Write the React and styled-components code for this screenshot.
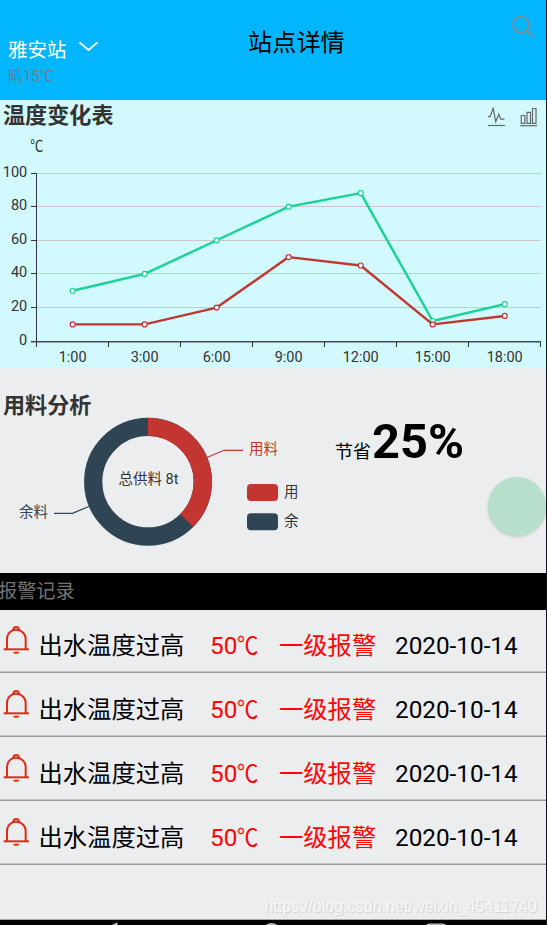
import React from "react";
import styled, { createGlobalStyle } from "styled-components";

const GlobalStyle = createGlobalStyle`
  * {
    box-sizing: border-box;
  }
  body {
    margin: 0;
    background: #ebedef;
    font-family: Roboto, "Noto Sans CJK SC", sans-serif;
  }
`;

const Screen = styled.div`
  position: relative;
  display: flex;
  flex-direction: column;
  width: 547px;
  height: 925px;
  overflow: hidden;
  background: #ebedef;
  border-right: 1px solid #0b1035;
`;

const Header = styled.header`
  display: grid;
  grid-template-columns: 240px 96px 1fr;
  flex: none;
  height: 100px;
  padding: 0 12px 0 8px;
  background: #02b6fd;
`;

const Station = styled.div`
  display: flex;
  flex-direction: column;
  padding-top: 34px;
`;

const StationName = styled.div`
  display: flex;
  align-items: center;
  height: 28px;
  font-size: 19.5px;
  color: #fff;

  svg {
    margin: -4px 0 0 12px;
  }
`;

const Weather = styled.div`
  height: 24px;
  line-height: 28px;
  font-size: 14.9px;
  color: #737b80;
`;

const Degree = styled.span`
  display: inline-block;
  transform: scaleX(0.88);
  transform-origin: left center;
`;

const Title = styled.h1`
  margin: 0;
  padding-top: 26px;
  line-height: 34px;
  font-size: 24.2px;
  font-weight: 400;
  white-space: nowrap;
  color: #000;
`;

const SearchButton = styled.div`
  display: flex;
  justify-content: flex-end;
  padding-top: 15px;
`;

const TemperaturePanel = styled.section`
  flex: none;
  height: 268px;
  background: #d2f9fe;
`;

const PanelHeader = styled.div`
  display: flex;
  justify-content: space-between;
  height: 32px;
  padding: 0 8px 0 3px;
`;

const PanelTitle = styled.h2`
  margin: 0;
  line-height: 30px;
  font-size: 22.1px;
  font-weight: 700;
  color: #333;
`;

const Tools = styled.div`
  display: flex;
  gap: 14px;
  padding-top: 7px;
`;

const Chart = styled.svg`
  display: block;
  overflow: visible;

  text {
    font-size: ${({ $size }) => $size || 14.5}px;
    fill: #333;
  }
`;

const UsagePanel = styled.section`
  display: grid;
  grid-template-columns: 300px 1fr;
  grid-template-rows: 38px 1fr;
  flex: none;
  height: 205px;
  padding-top: 21px;

  ${PanelTitle} {
    grid-column: 1 / 3;
    padding-left: 3px;
    line-height: 32px;
  }
`;

const Saving = styled.div`
  display: flex;
  align-items: baseline;
  gap: 1px;
  height: 60px;
  padding: 0 0 0 35px;
  margin-top: -15px;
  font-size: 18px;
  color: #000;
`;

const SavingValue = styled.strong`
  line-height: 60px;
  font-size: 48.8px;
  font-weight: 700;
`;

const FloatingBall = styled.div`
  position: absolute;
  top: 477px;
  right: 0;
  width: 58.5px;
  height: 58.5px;
  border-radius: 50%;
  background: #b7dfcb;
  box-shadow: 0 1px 3px rgba(0, 0, 0, 0.16);
`;

const RecordsHeader = styled.div`
  flex: none;
  height: 37px;
  line-height: 38px;
  font-size: 19.2px;
  text-indent: -2px;
  color: #737373;
  background: #000;
`;

const RecordList = styled.ul`
  flex: 1;
  margin: 0;
  padding: 0;
  list-style: none;
`;

const Record = styled.li`
  display: grid;
  grid-template-columns: 36.5px 171.5px 69px 116px 1fr;
  height: ${({ $first }) => ($first ? 63 : 64)}px;
  padding-left: 2px;
  border-bottom: 1px solid #98999b;
  box-shadow: inset 0 -1px 0 #c4c5c7;
  line-height: ${({ $first }) => ($first ? 72 : 74)}px;
  font-size: 24.3px;
  white-space: nowrap;

  svg {
    margin-top: ${({ $first }) => ($first ? 15 : 16)}px;
  }
`;

const Cell = styled.span`
  color: ${({ $alert }) => ($alert ? "#ff0505" : "#000")};
`;

const Watermark = styled.div`
  position: absolute;
  right: 9px;
  bottom: 9px;
  line-height: 20px;
  font-family: "Liberation Sans", sans-serif;
  font-size: 16.1px;
  color: #f7f8f8;
  text-shadow: 1px 1px 1px #cdcfd1;
`;

const NavBar = styled.footer`
  display: flex;
  flex: none;
  height: 6px;
  overflow: hidden;
  background: #000;
  border-top: 1px solid #aaa;
`;

const hours = ["1:00", "3:00", "6:00", "9:00", "12:00", "15:00", "18:00"];
const ticks = [
  { value: 100, y: 41.5 },
  { value: 80, y: 74.5 },
  { value: 60, y: 108.5 },
  { value: 40, y: 141.5 },
  { value: 20, y: 175.5 },
];
const series = [
  { color: "#19d395", values: [30, 40, 60, 80, 88, 12, 22] },
  { color: "#c23531", values: [10, 10, 20, 50, 45, 10, 15] },
];
const records = [1, 2, 3, 4];

const px = (i) => 72.7 + i * 72;
const py = (value) => 209.2 - value * 1.682;

const ChevronIcon = () => (
  <svg width="20" height="11" viewBox="0 0 20 11" fill="none">
    <path d="M.5 1.4L9.5 9L18.5 1.4" stroke="#fff" strokeWidth="1.8" />
  </svg>
);

const SearchIcon = () => (
  <svg width="22" height="23" viewBox="0 0 22 23" fill="none" stroke="#858b90">
    <circle cx="9" cy="9.5" r="8" strokeWidth="1.7" />
    <path d="M14.5 15.5L21 21.5" strokeWidth="2.3" />
  </svg>
);

const LineIcon = () => (
  <svg width="18" height="20" viewBox="0 0 18 20" fill="none" stroke="#666" strokeWidth="1.2">
    <path d="M0 9.7H2.1L5.2 1.2L7.7 14.8L10.8 7.2L12.7 12.2H16.5" />
    <path d="M0 18.5H16.8" />
  </svg>
);

const BarIcon = () => (
  <svg width="18" height="20" viewBox="0 0 18 20" fill="none" stroke="#666" strokeWidth="1.2">
    <path d="M1.3 8.5H4.8V16.3H1.3zM7 5.3H10.5V16.3H7zM12.5 1.5H16V16.3H12.5z" />
    <path d="M.3 18.7H17" />
  </svg>
);

const BellIcon = () => (
  <svg width="28" height="30" viewBox="0 0 28 30" fill="none" stroke="#e12b14">
    <path d="M1.6 24.3H26.8" strokeWidth="2" />
    <path
      d="M5 24.3V14.3C5 8.6 9 4.8 14.2 4.8S23.7 8.6 23.7 14.3V24.3"
      strokeWidth="2"
    />
    <path d="M11.3 5.1C11.3 .8 17.1 .8 17.1 5.1" strokeWidth="2" />
    <path d="M11.6 27.7H16.8" strokeWidth="2" />
  </svg>
);

const TemperatureChart = () => (
  <Chart width="546" height="236" viewBox="0 0 546 236">
    <text transform="translate(30.3 19) scale(.9 1)">℃</text>
    {ticks.map(({ value, y }) => (
      <g key={value}>
        <path d={`M37 ${y}H541`} stroke="#c9c7c9" />
        <path d={`M31 ${y}H36`} stroke="#333" />
        <text x="27.2" y={y + 3.8} textAnchor="end">
          {value}
        </text>
      </g>
    ))}
    <text x="27.2" y="213.3" textAnchor="end">
      0
    </text>
    <path d="M36.5 41V215" stroke="#333" />
    <path d="M31 209.7H541" stroke="#3f4b4d" strokeWidth="1.4" />
    {hours.map((hour, i) => (
      <g key={hour}>
        <path d={`M${108.5 + i * 72} 210V215`} stroke="#333" />
        <text x={px(i)} y="230.4" textAnchor="middle">
          {hour}
        </text>
      </g>
    ))}
    {series.map(({ color, values }) => (
      <g key={color} stroke={color}>
        <polyline
          points={values.map((v, i) => `${px(i)},${py(v)}`).join(" ")}
          fill="none"
          strokeWidth="2.4"
          strokeLinejoin="bevel"
        />
        {values.map((v, i) => (
          <circle key={i} cx={px(i)} cy={py(v)} r="2.5" fill="#fff" strokeWidth="1.2" />
        ))}
      </g>
    ))}
  </Chart>
);

const UsageChart = () => (
  <Chart width="300" height="146" viewBox="0 0 300 146" $size={14.5}>
    <clipPath id="legend">
      <rect x="247" y="50" width="52" height="60" />
    </clipPath>
    <g fill="none" strokeWidth="18.3">
      <circle cx="148" cy="54.7" r="54.8" stroke="#2f4554" />
      <path d="M148 -.1A54.8 54.8 0 0 1 186.75 93.45" stroke="#c23531" />
    </g>
    <path d="M207 30.5L224 23.3H243" fill="none" stroke="#c23531" strokeWidth="1.2" />
    <path d="M90 79L72.5 86.3H54" fill="none" stroke="#2f4554" strokeWidth="1.2" />
    <text x="249" y="27" style={{ fill: "#c23531" }}>
      用料
    </text>
    <text x="19" y="90.3" style={{ fill: "#2f4554" }}>
      余料
    </text>
    <text x="148.5" y="56.7" textAnchor="middle">
      总供料 8t
    </text>
    <g clipPath="url(#legend)">
      <rect x="247" y="57" width="31" height="17" rx="4" fill="#c23531" />
      <rect x="247" y="86.3" width="31" height="17" rx="4" fill="#2f4554" />
      <text x="284" y="69.7">
        用料
      </text>
      <text x="284" y="99">
        余料
      </text>
    </g>
  </Chart>
);

const App = () => {
  return (
    <Screen>
      <GlobalStyle />
      <Header>
        <Station>
          <StationName>
            雅安站
            <ChevronIcon />
          </StationName>
          <Weather>
            晴15<Degree>℃</Degree>
          </Weather>
        </Station>
        <Title>站点详情</Title>
        <SearchButton>
          <SearchIcon />
        </SearchButton>
      </Header>
      <TemperaturePanel>
        <PanelHeader>
          <PanelTitle>温度变化表</PanelTitle>
          <Tools>
            <LineIcon />
            <BarIcon />
          </Tools>
        </PanelHeader>
        <TemperatureChart />
      </TemperaturePanel>
      <UsagePanel>
        <PanelTitle>用料分析</PanelTitle>
        <UsageChart />
        <Saving>
          节省<SavingValue>25%</SavingValue>
        </Saving>
      </UsagePanel>
      <RecordsHeader>报警记录</RecordsHeader>
      <RecordList>
        {records.map((id, i) => (
          <Record key={id} $first={i === 0}>
            <BellIcon />
            <Cell>出水温度过高</Cell>
            <Cell $alert>
              50<Degree>℃</Degree>
            </Cell>
            <Cell $alert>一级报警</Cell>
            <Cell>2020-10-14</Cell>
          </Record>
        ))}
      </RecordList>
      <NavBar>
        <svg width="546" height="5" viewBox="0 0 546 5" fill="none" stroke="#bbb" strokeWidth="2">
          <path d="M109 8L116.5 3.6V8" strokeLinejoin="round" />
          <circle cx="271.5" cy="12" r="8" />
          <path d="M427 8V6Q427 4.4 429 4.4H443Q445 4.4 445 6V8" />
        </svg>
      </NavBar>
      <Watermark>https://blog.csdn.net/weixin_45411740</Watermark>
      <FloatingBall />
    </Screen>
  );
};

export default App;
